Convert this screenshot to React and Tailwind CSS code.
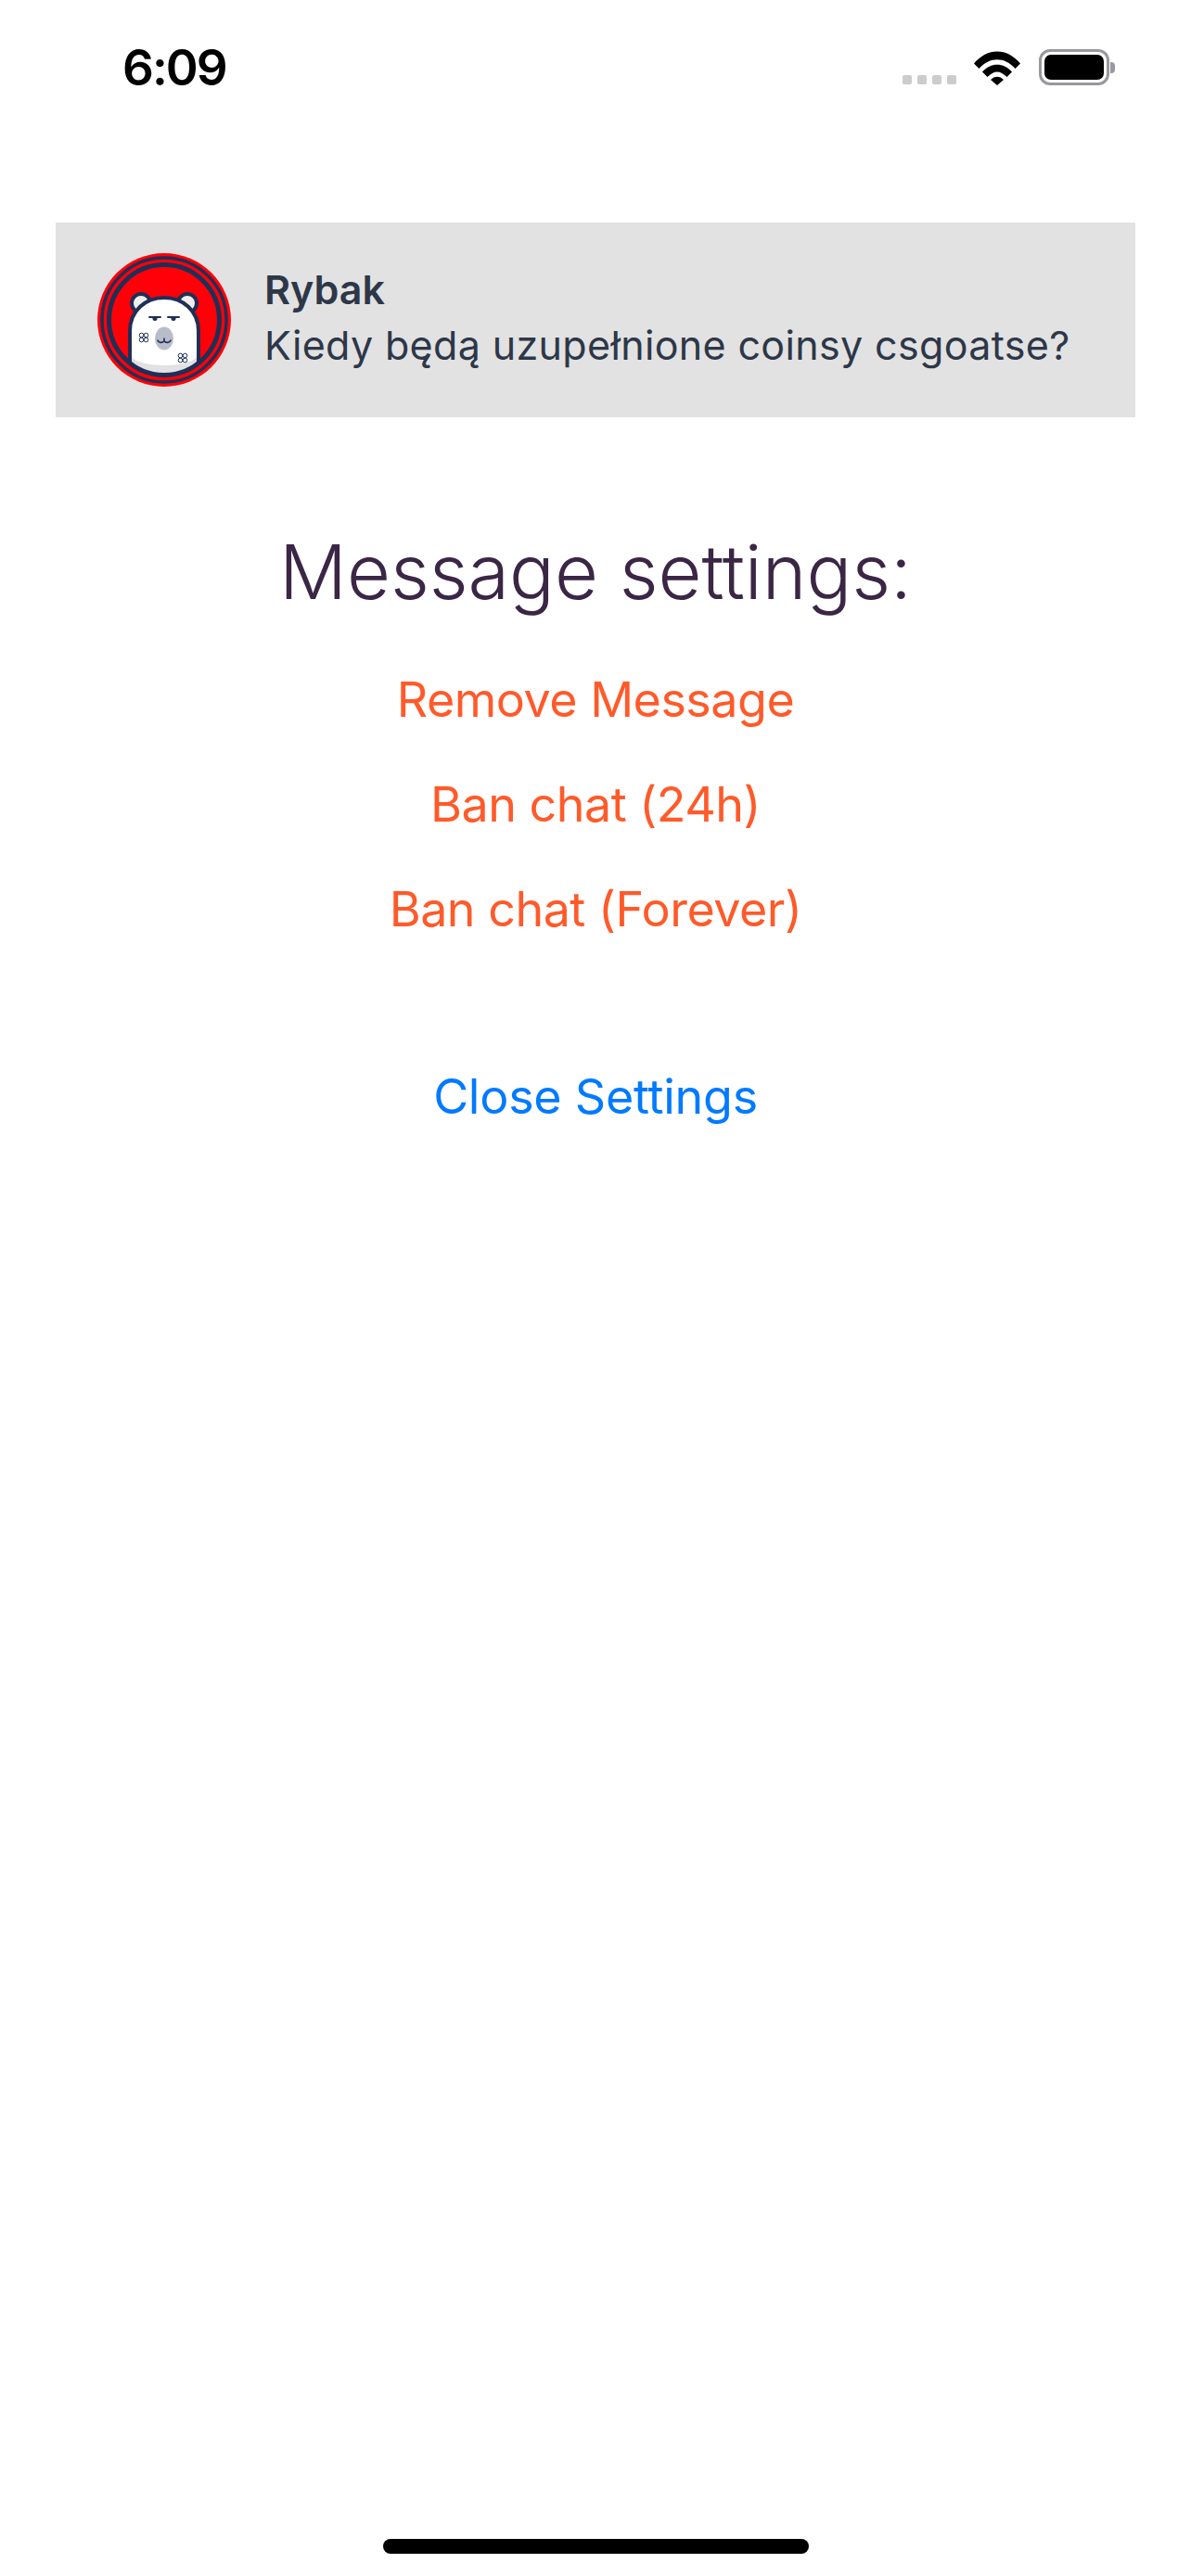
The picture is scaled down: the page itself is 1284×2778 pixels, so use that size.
import React from 'react'

const Avatar = () => (
  <svg width="144" height="144" viewBox="0 0 144 144" className="shrink-0">
    <defs>
      <clipPath id="inner">
        <circle cx="72" cy="72" r="60" />
      </clipPath>
    </defs>
    <circle cx="72" cy="72" r="72" fill="#ff0009" />
    <circle cx="72" cy="72" r="67" fill="none" stroke="#1f2f56" strokeWidth="3.500" />
    <g clipPath="url(#inner)">
      <circle cx="47" cy="54" r="10" fill="#f1eeec" stroke="#1f2f56" strokeWidth="4" />
      <circle cx="97" cy="54" r="10" fill="#f1eeec" stroke="#1f2f56" strokeWidth="4" />
      <path d="M35 130V84C35 62 52 48 72 48s37 14 37 36v46z" fill="#ffffff" stroke="#1f2f56" strokeWidth="4" />
      <path d="M37 112c10 12 60 12 70 0v20H37z" fill="#e3e1e3" />
    </g>
    <circle cx="72" cy="72" r="59.500" fill="none" stroke="#1f2f56" strokeWidth="5" />
    <path d="M56 69h12M76 69h12" stroke="#1f2f56" strokeWidth="2" strokeLinecap="round" />
    <circle cx="62" cy="70.500" r="2.500" fill="#1f2f56" />
    <circle cx="82" cy="70.500" r="2.500" fill="#1f2f56" />
    <ellipse cx="72" cy="92" rx="10" ry="12.500" fill="#b9bcc9" />
    <path d="M65 94c1 3 5 3 7 1c2 2 6 2 7-1M72 92v3" fill="none" stroke="#1f2f56" strokeWidth="1.600" strokeLinecap="round" />
    <g fill="none" stroke="#1f2f56" strokeWidth="1">
      <circle cx="47.500" cy="88.500" r="2.300" />
      <circle cx="52.500" cy="88.500" r="2.300" />
      <circle cx="47.500" cy="93.500" r="2.300" />
      <circle cx="52.500" cy="93.500" r="2.300" />
      <circle cx="89.500" cy="110.500" r="2.300" />
      <circle cx="94.500" cy="110.500" r="2.300" />
      <circle cx="89.500" cy="115.500" r="2.300" />
      <circle cx="94.500" cy="115.500" r="2.300" />
    </g>
  </svg>
)

const StatusBar = () => (
  <div className="h-[132px] flex items-start justify-between pl-[132px] pr-[82px] pt-[41px]">
    <span className="text-[53px] leading-[65px] font-semibold text-black font-['Inter',sans-serif] tracking-[-2px]">6:09</span>
    <div className="flex items-end pt-[12px]">
      <div className="flex gap-[6px] mb-[1px]">
        <div className="w-[10px] h-[10px] rounded-[2px] bg-[#cccccc]" />
        <div className="w-[10px] h-[10px] rounded-[2px] bg-[#cccccc]" />
        <div className="w-[10px] h-[10px] rounded-[2px] bg-[#cccccc]" />
        <div className="w-[10px] h-[10px] rounded-[2px] bg-[#cccccc]" />
      </div>
      <svg width="50" height="37" viewBox="0 0 50 37" className="ml-[19px]">
        <path d="M0 13.500C14-4 36-4 50 13.500L44.500 19C33 6 17 6 5.500 19z" fill="#000" />
        <path d="M9 22.500C18 12 32 12 41 22.500L35.500 28C28 20.500 22 20.500 14.500 28z" fill="#000" />
        <path d="M18 31C22 26.500 28 26.500 32 31L25 37z" fill="#000" />
      </svg>
      <div className="ml-[20px] flex items-center">
        <div className="w-[76px] h-[39px] rounded-[12px] border-[3px] border-[#98989f] p-[3px]">
          <div className="w-full h-full rounded-[7px] bg-black" />
        </div>
        <div className="w-[5px] h-[12px] rounded-r-[4px] bg-[#98989f] ml-[1px]" />
      </div>
    </div>
  </div>
)

export default function App() {
  return (
    <div className="w-[1284px] h-[2778px] bg-white flex flex-col font-['Inter',sans-serif]">
      <StatusBar />
      <div className="flex-1 flex flex-col">
        <div className="pt-[108px] px-[60px]">
          {/* Message preview */}
          <div className="h-[210px] bg-[#e2e2e2] flex items-center pl-[45px] pr-[60px]">
            <Avatar />
            <div className="ml-[36px] mb-[6px] text-[#2d3748]">
              <div className="text-[43px] leading-[60px] font-semibold">Rybak</div>
              <div className="text-[43px] leading-[60px] tracking-[0.35px] whitespace-nowrap">Kiedy będą uzupełnione coinsy csgoatse?</div>
            </div>
          </div>
        </div>

        {/* Settings */}
        <div className="flex flex-col items-center mt-[119px]">
          <h1 className="text-[81px] leading-[96px] font-light text-[#3b2646]">Message settings:</h1>
          <button className="mt-[59px] text-[52px] leading-[62px] tracking-[-0.5px] text-[#ff5a2a]">Remove Message</button>
          <button className="mt-[51px] text-[52px] leading-[62px] tracking-[-0.5px] text-[#ff5a2a]">Ban chat (24h)</button>
          <button className="mt-[51px] text-[52px] leading-[62px] tracking-[-0.5px] text-[#ff5a2a]">Ban chat (Forever)</button>
          <button className="mt-[140px] text-[52px] leading-[62px] tracking-[-0.25px] text-[#007aff]">Close Settings</button>
        </div>

        <div className="mt-auto mb-[24px] mx-auto w-[459px] h-[16px] rounded-full bg-black" />
      </div>
    </div>
  )
}
